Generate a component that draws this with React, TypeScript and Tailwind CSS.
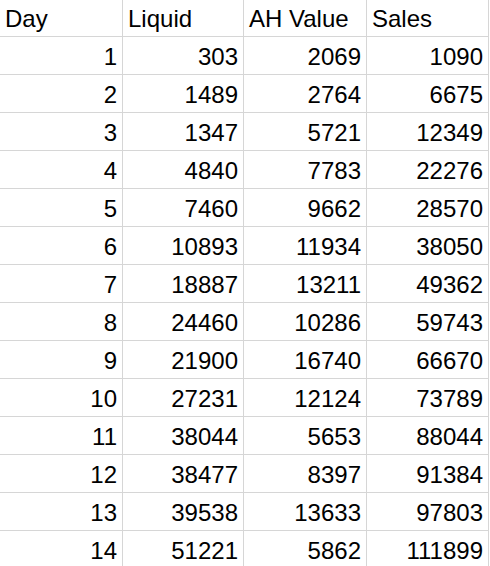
import React from "react";

const rows: [number, number, number, number][] = [
  [1, 303, 2069, 1090],
  [2, 1489, 2764, 6675],
  [3, 1347, 5721, 12349],
  [4, 4840, 7783, 22276],
  [5, 7460, 9662, 28570],
  [6, 10893, 11934, 38050],
  [7, 18887, 13211, 49362],
  [8, 24460, 10286, 59743],
  [9, 21900, 16740, 66670],
  [10, 27231, 12124, 73789],
  [11, 38044, 5653, 88044],
  [12, 38477, 8397, 91384],
  [13, 39538, 13633, 97803],
  [14, 51221, 5862, 111899],
];

const cols = "grid grid-cols-[123px_121px_123px_122px]";

export default function App() {
  return (
    <div
      className="w-[490px] h-[566px] overflow-hidden bg-white text-black text-[24px] leading-[24px]"
      style={{ fontFamily: '"Liberation Sans", Arial, sans-serif' }}
    >
      <div className={`${cols} h-[37px]`}>
        {["Day", "Liquid", "AH Value", "Sales"].map((h) => (
          <div
            key={h}
            className="flex items-end pl-[5px] pb-[5px] border-b border-r border-[#d6d6d6] whitespace-nowrap"
          >
            {h}
          </div>
        ))}
      </div>
      {rows.map((r) => (
        <div key={r[0]} className={`${cols} h-[38px]`}>
          {r.map((v, i) => (
            <div
              key={i}
              className="flex items-end justify-end pr-[5px] pb-[5px] border-b border-r border-[#d6d6d6]"
            >
              {v}
            </div>
          ))}
        </div>
      ))}
    </div>
  );
}
